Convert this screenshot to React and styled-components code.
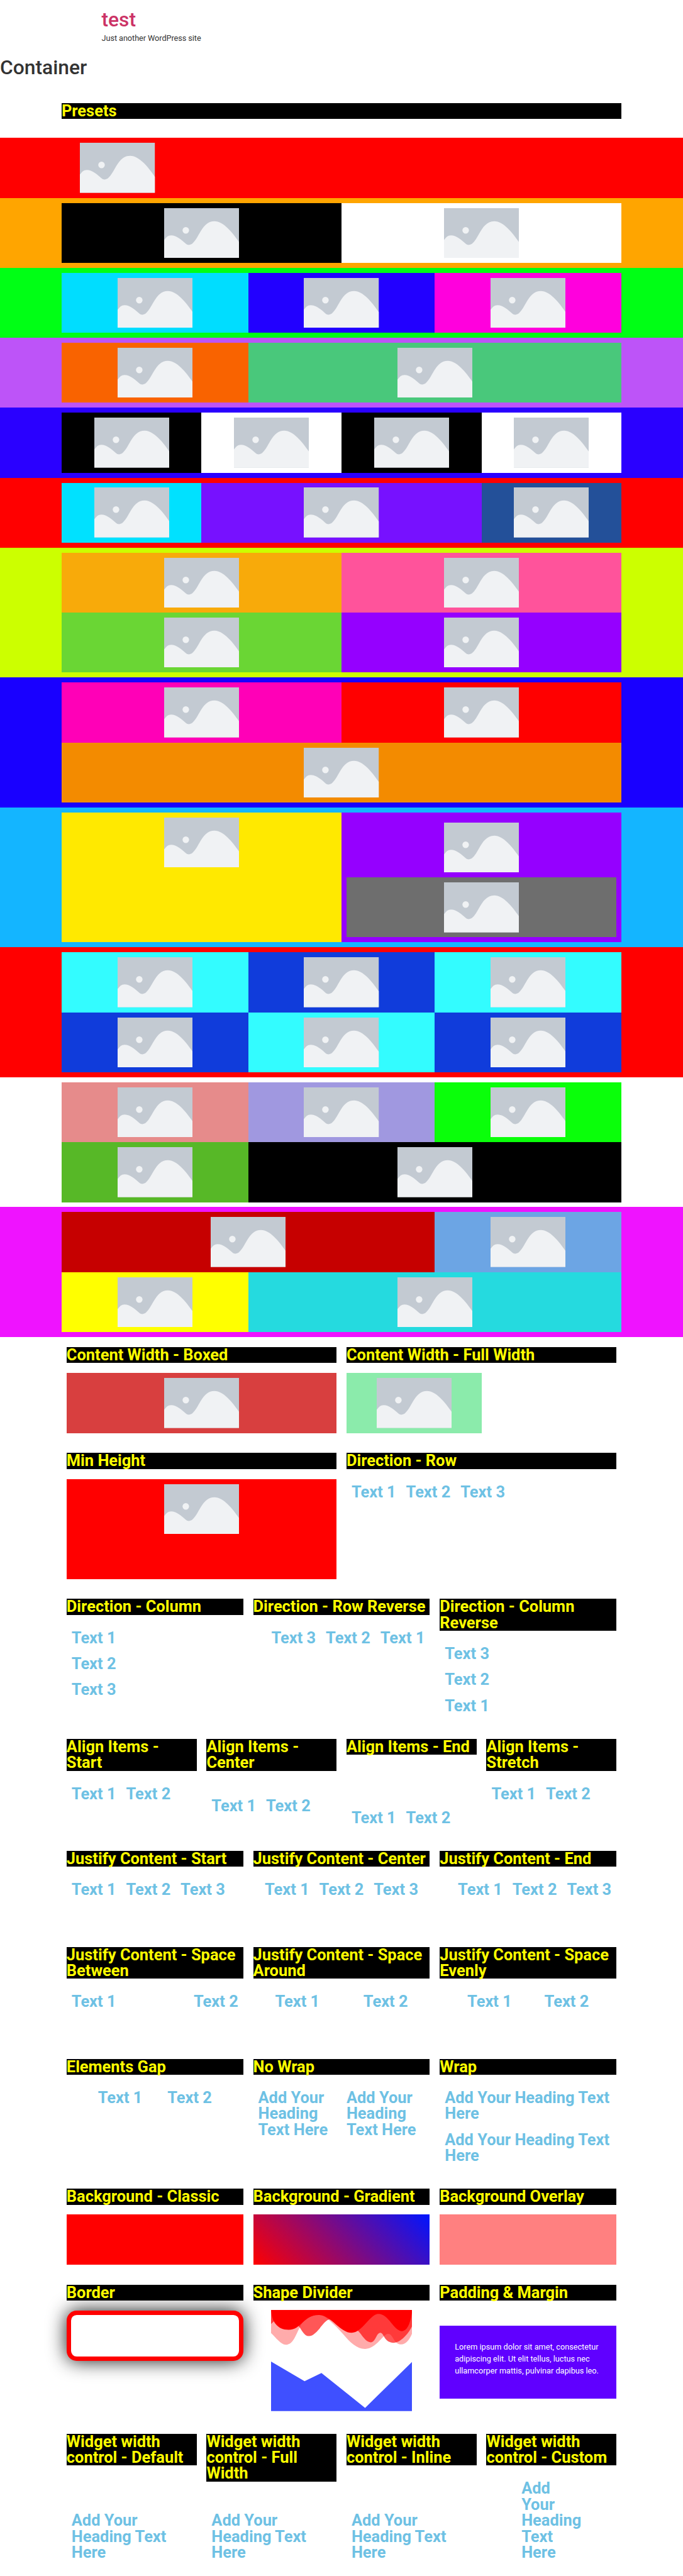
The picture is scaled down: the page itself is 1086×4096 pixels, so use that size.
import React from "react";
import styled, { createGlobalStyle } from "styled-components";

const GlobalStyle = createGlobalStyle`
  *, *::before, *::after { box-sizing: border-box; }
  html { font-size: 7.948px; }
  body {
    margin: 0;
    background: #fff;
    color: #333;
    font-family: Roboto, "Liberation Sans", sans-serif;
    font-size: 1.6rem;
    line-height: 1.5;
    overflow-x: hidden;
  }
  h1, h2, h4, p { margin: 0; }
`;

const SiteHeader = styled.header`
  width: 96rem;
  height: 11.2rem;
  margin: 0 auto;
  padding-top: 1.6rem;
`;

const SiteTitle = styled.h1`
  color: #cc3366;
  font-size: 4rem;
  font-weight: 500;
  line-height: 1.2;
`;

const Tagline = styled.p`
  letter-spacing: -0.008rem;
`;

const PageTitle = styled.h1`
  font-size: 4rem;
  font-weight: 500;
  line-height: 1.2;
`;

const Boxed = styled.div`
  width: 112rem;
  margin: 0 auto;
`;

const TitleSpot = styled(Boxed)`
  height: 11.6rem;
  padding-top: 4.6rem;
`;

const Label = styled.h2`
  background: #000;
  color: #ff0;
  font-size: 3.2rem;
  font-weight: 700;
  line-height: 1;
`;

const Band = styled.section`
  background: ${(p) => p.$bg};
  padding: ${(p) => (p.$flush ? "0" : "1rem 0")};
`;

const Cells = styled(Boxed)`
  display: flex;
  flex-wrap: wrap;
`;

const Cell = styled.div`
  display: flex;
  flex-direction: column;
  align-items: center;
  width: ${(p) => p.$w};
  padding: 1rem;
  background: ${(p) => p.$bg};
`;

const NestedCell = styled(Cell)`
  align-items: stretch;
`;

const Picture = styled.svg`
  display: block;
  width: 15rem;
  height: 10rem;
  flex: none;
`;

const Row = styled(Boxed)`
  display: flex;
`;

const Column = styled.div`
  display: flex;
  flex-direction: column;
  justify-content: ${(p) => (p.$bottom ? "space-between" : "flex-start")};
  gap: 2rem;
  flex: 1 1 0;
  min-width: 0;
  padding: 2rem 1rem;
`;

const Panel = styled.div`
  display: flex;
  flex-direction: column;
  align-items: center;
  width: ${(p) => p.$w || "100%"};
  min-height: ${(p) => p.$h || "0"};
  padding: 1rem;
  background: ${(p) => p.$bg};
`;

const FlexBox = styled.div`
  display: flex;
  flex-direction: ${(p) => p.$dir || "row"};
  align-items: ${(p) => p.$align || "flex-start"};
  justify-content: ${(p) => p.$justify || "flex-start"};
  flex-wrap: ${(p) => p.$wrap || "nowrap"};
  gap: ${(p) => p.$gap || "0"};
  min-height: ${(p) => p.$h || "0"};
`;

const Text = styled.h4`
  width: ${(p) => p.$w || "auto"};
  padding: 1rem;
  color: #6ec1e4;
  font-size: 3.2rem;
  font-weight: 700;
  line-height: 1;
`;

const BorderBox = styled.div`
  height: 10rem;
  border: 0.9rem solid #f00;
  border-radius: 2rem;
  background: #fff;
  box-shadow: 0 0 3.8rem rgba(0, 0, 0, 0.9);
`;

const RaisedLabel = styled(Label)`
  position: relative;
`;

const DividerBox = styled.div`
  display: flex;
  flex-direction: column;
  justify-content: space-between;
  align-self: center;
  width: 80%;
  height: 20.2rem;
  margin-top: -0.1rem;
`;

const DividerShape = styled.svg`
  display: block;
  width: 100%;
  height: ${(p) => p.$h};
`;

const PaddedBox = styled.div`
  margin: 3rem 0;
  padding: 3rem 3rem 4.4rem;
  background: #6000ff;
  color: #fff;
  white-space: nowrap;
`;

const Placeholder = () => (
  <Picture viewBox="0 0 450 300" preserveAspectRatio="none">
    <rect width="450" height="300" fill="#c3cad2" />
    <path
      d="M0 191C12 175 22 163 42 163C75 163 105 191 130 213C140 222 158 225 173 209C213 170 230 78 302 78C355 78 410 145 450 204V300H0Z"
      fill="#f0f2f4"
    />
    <circle cx="130" cy="133" r="19.5" fill="#f0f2f4" />
  </Picture>
);

const third = "33.3333%";
const twoThirds = "66.6667%";

const bands = [
  { bg: "#ffa500", cells: [["50%", "#000"], ["50%", "#fff"]] },
  { bg: "#00ff15", cells: [[third, "#00ddff"], [third, "#2200ff"], [third, "#ff00dd"]] },
  { bg: "#bd54f8", cells: [[third, "#f96300"], [twoThirds, "#49c87b"]] },
  { bg: "#2a00ff", cells: [["25%", "#000"], ["25%", "#fff"], ["25%", "#000"], ["25%", "#fff"]] },
  { bg: "#ff0000", cells: [["25%", "#00e1ff"], ["50%", "#7711ff"], ["25%", "#235099"]] },
  { bg: "#ccff00", cells: [["50%", "#f8aa0a"], ["50%", "#ff539b"], ["50%", "#6ad634"], ["50%", "#9500ff"]] },
  { bg: "#1900ff", cells: [["50%", "#ff00b7"], ["50%", "#ff0000"], ["100%", "#f38b00"]] },
];

const lowerBands = [
  {
    bg: "#ff0000",
    cells: [
      [third, "#33fcff"], [third, "#103cdb"], [third, "#33fcff"],
      [third, "#103cdb"], [third, "#33fcff"], [third, "#103cdb"],
    ],
  },
  {
    bg: "#ffffff",
    cells: [
      [third, "#e68b8b"], [third, "#a098e0"], [third, "#0aff0a"],
      [third, "#57b827"], [twoThirds, "#000"],
    ],
  },
  {
    bg: "#ef13ff",
    cells: [[twoThirds, "#c60000"], [third, "#6ca5e4"], [third, "#ffff00"], [twoThirds, "#25dadf"]],
  },
];

const PresetBand = ({ bg, cells }) => (
  <Band $bg={bg}>
    <Cells>
      {cells.map(([w, color], i) => (
        <Cell key={i} $w={w} $bg={color}>
          <Placeholder />
        </Cell>
      ))}
    </Cells>
  </Band>
);

const Demo = ({ title, items, bottom, ...box }) => (
  <Column $bottom={bottom}>
    <Label>{title}</Label>
    <FlexBox {...box}>
      {items.map((t, i) => (
        <Text key={i}>{t}</Text>
      ))}
    </FlexBox>
  </Column>
);

const two = ["Text 1", "Text 2"];
const three = ["Text 1", "Text 2", "Text 3"];
const heading = "Add Your Heading Text Here";

export default function App() {
  return (
    <>
      <GlobalStyle />
      <SiteHeader>
        <SiteTitle>test</SiteTitle>
        <Tagline>Just another WordPress site</Tagline>
      </SiteHeader>
      <PageTitle>Container</PageTitle>
      <TitleSpot>
        <Label>Presets</Label>
      </TitleSpot>

      <Band $bg="#ff0000" $flush>
        <Cells>
          <Cell $w="20%" $bg="transparent">
            <Placeholder />
          </Cell>
        </Cells>
      </Band>
      {bands.map((b, i) => (
        <PresetBand key={i} {...b} />
      ))}
      <Band $bg="#14b5ff">
        <Cells>
          <Cell $w="50%" $bg="#ffe900">
            <Placeholder />
          </Cell>
          <NestedCell $w="50%" $bg="#9500ff">
            <Cell $w="100%" $bg="transparent">
              <Placeholder />
            </Cell>
            <Cell $w="100%" $bg="#6e6e6e">
              <Placeholder />
            </Cell>
          </NestedCell>
        </Cells>
      </Band>
      {lowerBands.map((b, i) => (
        <PresetBand key={i} {...b} />
      ))}

      <Row>
        <Column>
          <Label>Content Width - Boxed</Label>
          <Panel $bg="#d83f3f">
            <Placeholder />
          </Panel>
        </Column>
        <Column>
          <Label>Content Width - Full Width</Label>
          <Panel $bg="#8bebab" $w="50%">
            <Placeholder />
          </Panel>
        </Column>
      </Row>
      <Row>
        <Column>
          <Label>Min Height</Label>
          <Panel $bg="#ff0000" $h="20rem">
            <Placeholder />
          </Panel>
        </Column>
        <Demo title="Direction - Row" items={three} />
      </Row>
      <Row>
        <Demo title="Direction - Column" items={three} $dir="column" />
        <Demo title="Direction - Row Reverse" items={three} $dir="row-reverse" />
        <Demo title="Direction - Column Reverse" items={three} $dir="column-reverse" />
      </Row>
      <Row>
        <Demo bottom title="Align Items - Start" items={two} $h="10rem" />
        <Demo bottom title="Align Items - Center" items={two} $h="10rem" $align="center" />
        <Demo bottom title="Align Items - End" items={two} $h="10rem" $align="flex-end" />
        <Demo bottom title="Align Items - Stretch" items={two} $h="10rem" $align="stretch" />
      </Row>
      <Row>
        <Demo title="Justify Content - Start" items={three} $h="10rem" />
        <Demo title="Justify Content - Center" items={three} $h="10rem" $justify="center" />
        <Demo title="Justify Content - End" items={three} $h="10rem" $justify="flex-end" />
      </Row>
      <Row>
        <Demo title="Justify Content - Space Between" items={two} $h="10rem" $justify="space-between" />
        <Demo title="Justify Content - Space Around" items={two} $h="10rem" $justify="space-around" />
        <Demo title="Justify Content - Space Evenly" items={two} $h="10rem" $justify="space-evenly" />
      </Row>
      <Row>
        <Demo title="Elements Gap" items={two} $justify="center" $gap="3rem" />
        <Demo title="No Wrap" items={[heading, heading]} />
        <Demo title="Wrap" items={[heading, heading]} $wrap="wrap" />
      </Row>
      <Row>
        <Column>
          <Label>Background - Classic</Label>
          <Panel $bg="#ff0000" $h="10rem" />
        </Column>
        <Column>
          <Label>Background - Gradient</Label>
          <Panel $bg="linear-gradient(45deg, #ff0000 0%, #0015ff 100%)" $h="10rem" />
        </Column>
        <Column>
          <Label>Background Overlay</Label>
          <Panel $bg="#ff8080" $h="10rem" />
        </Column>
      </Row>
      <Row>
        <Column>
          <RaisedLabel>Border</RaisedLabel>
          <BorderBox />
        </Column>
        <Column>
          <RaisedLabel>Shape Divider</RaisedLabel>
          <DividerBox>
            <DividerShape $h="8rem" viewBox="24 21 852 240" preserveAspectRatio="none">
              <path
                fill="#f00"
                fillOpacity=".33"
                d="M24 21V160C52 186 84 230 112 230C159 230 172 170 198 125C215 80 260 51 310 51C338 51 352 64 372 80C400 104 435 137 463 171C500 215 543 255 590 255C640 255 674 209 703 180C716 164 738 157 750 176C768 202 777 228 808 228C838 228 861 196 876 158V21Z"
              />
              <path
                fill="#f00"
                fillOpacity=".66"
                d="M24 21V105L45 86C90 70 150 60 190 117C209 139 223 178 252 178C301 178 342 78 378 78L430 80L510 110L548 146C574 173 594 215 625 215C656 215 658 158 683 158C695 158 700 174 709 187C720 205 739 218 762 218C805 218 852 165 876 115V21Z"
              />
              <path
                fill="#f00"
                d="M24 21C28 90 61 140 130 140C207 140 220 51 310 51C387 51 438 158 510 158C574 158 620 45 672 45C733 45 765 148 812 148C848 148 866 95 876 21Z"
              />
            </DividerShape>
            <DividerShape $h="9.9rem" viewBox="24 30 852 297" preserveAspectRatio="none">
              <path fill="#3f50ff" d="M24 30L226 148L328 99L591 308L876 30V327H24Z" />
            </DividerShape>
          </DividerBox>
        </Column>
        <Column>
          <RaisedLabel>Padding &amp; Margin</RaisedLabel>
          <PaddedBox>
            Lorem ipsum dolor sit amet, consectetur
            <br />
            adipiscing elit. Ut elit tellus, luctus nec
            <br />
            ullamcorper mattis, pulvinar dapibus leo.
          </PaddedBox>
        </Column>
      </Row>
      <Row>
        <Demo bottom title="Widget width control - Default" items={[heading]} />
        <Demo bottom title="Widget width control - Full Width" items={[heading]} />
        <Demo bottom title="Widget width control - Inline" items={[heading]} />
        <Column $bottom>
          <Label>Widget width control - Custom</Label>
          <FlexBox $justify="center">
            <Text $w="14rem">{heading}</Text>
          </FlexBox>
        </Column>
      </Row>
    </>
  );
}
